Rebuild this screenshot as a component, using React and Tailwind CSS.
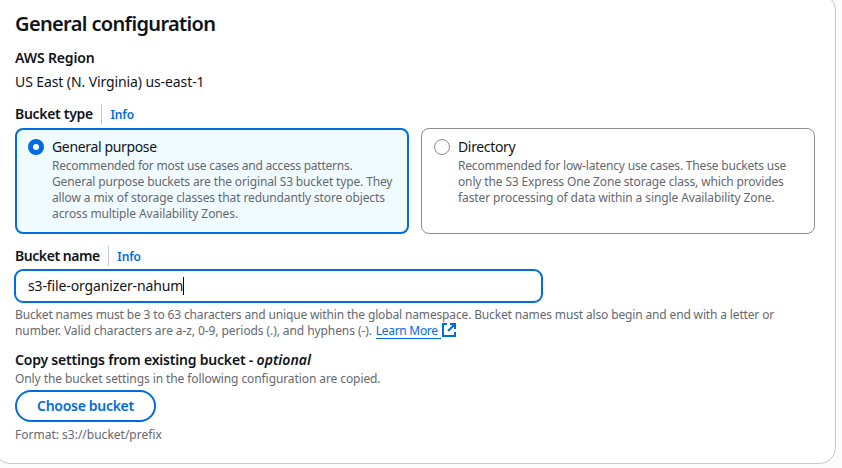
import React from "react";

function InfoLink() {
  return (
    <a className="ml-[8.5px] flex h-5 border-l border-[#c6c6cd] pt-px pl-2 text-[12px] leading-5 font-semibold tracking-[-0.1px] text-[#006ce0]">
      Info
    </a>
  );
}

function Tile({ selected, title, lines }) {
  return (
    <div
      className={
        "flex h-[106px] w-[394px] rounded-lg " +
        (selected ? "border-2 border-[#006ce0] bg-[#f0fbff] pl-[11px] pt-[7px]" : "border border-[#8c8c94] bg-white pl-3 pt-2")
      }
    >
      <span
        className={
          "mt-[2px] h-4 w-4 shrink-0 rounded-full bg-white " +
          (selected ? "border-[5px] border-[#006ce0]" : "border border-[#8c8c94]")
        }
      />
      <div className="ml-2">
        <div className="text-[14px] leading-5 tracking-[-0.35px] text-[#0f141a]">{title}</div>
        <div className="mt-px text-[12px] leading-4 text-[#656871]">
          {lines.map(([text, tracking]) => (
            <div key={text} className={"whitespace-nowrap " + tracking}>
              {text}
            </div>
          ))}
        </div>
      </div>
    </div>
  );
}

export default function App() {
  return (
    <div className="h-[468px] w-[842px] overflow-hidden bg-[#fcfcfd] font-['Noto_Sans',sans-serif] text-[#0f141a]">
      <section className="-mt-[6px] -ml-[6px] h-[470px] w-[842px] rounded-2xl border border-[#c6c6cd] bg-white pt-[17px] pl-5 text-[14px] leading-5 whitespace-nowrap">
        <h2 className="text-[20px] leading-6 font-semibold tracking-[-0.64px]">General configuration</h2>
        <div className="mt-3 font-semibold tracking-[-0.15px]">AWS Region</div>
        <div className="mt-1 tracking-[-0.1px]">US East (N. Virginia) us-east-1</div>
        <div className="mt-3 flex font-semibold tracking-[-0.3px]">
          <span>Bucket type</span>
          <InfoLink />
        </div>
        <div className="mt-1 flex gap-3">
          <Tile
            selected
            title="General purpose"
            lines={[
              ["Recommended for most use cases and access patterns.", "tracking-[-0.22px]"],
              ["General purpose buckets are the original S3 bucket type. They", "tracking-[-0.14px]"],
              ["allow a mix of storage classes that redundantly store objects", "tracking-[-0.11px]"],
              ["across multiple Availability Zones.", "tracking-[-0.1px]"],
            ]}
          />
          <Tile
            title="Directory"
            lines={[
              ["Recommended for low-latency use cases. These buckets use", "tracking-[-0.18px]"],
              ["only the S3 Express One Zone storage class, which provides", "tracking-[-0.14px]"],
              ["faster processing of data within a single Availability Zone.", "tracking-[-0.1px]"],
            ]}
          />
        </div>
        <div className="mt-3 flex font-semibold tracking-[-0.44px]">
          <span>Bucket name</span>
          <InfoLink />
        </div>
        <div className="mt-[3px] -ml-px flex h-[34px] w-[529px] items-center rounded-[9px] border-2 border-[#006ce0] pl-3">
          <span className="tracking-[-0.13px]">s3-file-organizer-nahum</span>
          <span className="h-[18px] w-px bg-black" />
        </div>
        <div className="mt-1 text-[12px] leading-4 text-[#656871]">
          <div className="tracking-[-0.148px]">
            Bucket names must be 3 to 63 characters and unique within the global namespace. Bucket names must also begin and end with a letter or
          </div>
          <div className="flex">
            <span className="tracking-[-0.085px]">number. Valid characters are a-z, 0-9, periods (.), and hyphens (-).</span>
            <a className="ml-1 flex text-[#006ce0]">
              <span className="h-4 border-b border-[#006ce0] pr-[3px] tracking-[-0.3px]">Learn More</span>
              <svg className="ml-px h-[14px] w-[14px]" viewBox="0 0 14 14" fill="none" stroke="currentColor" strokeWidth="2">
                <path d="M5 1H1v12h12V9M8 1h5v5M13 1 6 8" />
              </svg>
            </a>
          </div>
        </div>
        <div className="mt-[11px] font-semibold">
          <span className="tracking-[-0.2px]">Copy settings from existing bucket - </span>
          <i className="tracking-[0.05px]">optional</i>
        </div>
        <div className="mt-px text-[12px] leading-4 tracking-[-0.09px] text-[#656871]">
          Only the bucket settings in the following configuration are copied.
        </div>
        <button className="mt-[3px] flex h-8 w-[141px] items-center justify-center rounded-full border-2 border-[#006ce0] font-semibold tracking-[-0.3px] text-[#006ce0]">
          Choose bucket
        </button>
        <div className="mt-[5px] text-[12px] leading-4 text-[#656871]">Format: s3://bucket/prefix</div>
      </section>
    </div>
  );
}
